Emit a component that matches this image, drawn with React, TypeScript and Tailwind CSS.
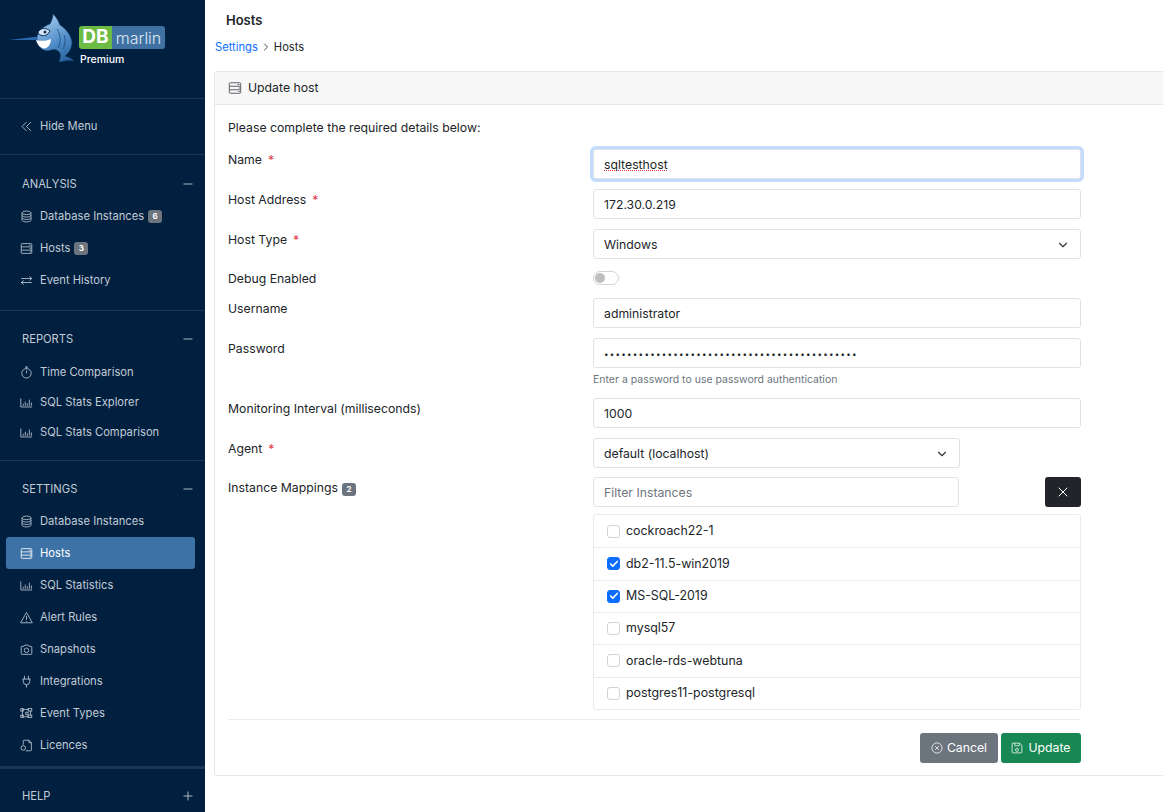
import { ChevronDown, Minus, Plus, X, Check, ChevronRight } from "lucide-react";

type IconProps = { className?: string };

function Svg({ className, children }: IconProps & { children: React.ReactNode }) {
  return (
    <svg viewBox="0 0 16 16" fill="none" stroke="currentColor" strokeWidth="1" className={className}>
      {children}
    </svg>
  );
}

const HideIcon = ({ className }: IconProps) => (
  <Svg className={className}>
    <path d="M8 2.5 2.5 8 8 13.5M13.5 2.5 8 8l5.5 5.5" />
  </Svg>
);
const DatabaseIcon = ({ className }: IconProps) => (
  <Svg className={className}>
    <ellipse cx="8" cy="3.5" rx="5.5" ry="2.2" />
    <path d="M2.5 3.5v9c0 1.2 2.5 2.2 5.5 2.2s5.5-1 5.5-2.2v-9M2.5 6.5c0 1.2 2.5 2.2 5.5 2.2s5.5-1 5.5-2.2M2.5 9.5c0 1.2 2.5 2.2 5.5 2.2s5.5-1 5.5-2.2" />
  </Svg>
);
const HostIcon = ({ className }: IconProps) => (
  <Svg className={className}>
    <rect x="1.5" y="2" width="13" height="12" rx="1" />
    <path d="M1.5 6h13M1.5 10h13M11 4h2M12 8h1.5M12 12h1.5" />
  </Svg>
);
const ExchangeIcon = ({ className }: IconProps) => (
  <Svg className={className}>
    <path d="M1.5 5.5h13M11.5 3l3 2.5-3 2.5M14.5 10.5h-13M4.5 8l-3 2.5 3 2.5" />
  </Svg>
);
const StopwatchIcon = ({ className }: IconProps) => (
  <Svg className={className}>
    <circle cx="8" cy="9" r="5.8" />
    <path d="M6.2 1.2h3.6M8 1.2v2M8 5.5V9" />
  </Svg>
);
const ChartIcon = ({ className }: IconProps) => (
  <Svg className={className}>
    <path d="M1 3v10.5h14M4 12V9.5M6.5 12V7M9 12V9M11.5 12V4.5M14 12V8" />
  </Svg>
);
const AlertIcon = ({ className }: IconProps) => (
  <Svg className={className}>
    <path d="M8 1.8 15.2 14.5H.8L8 1.8ZM8 6v5M8 12.2v1" />
  </Svg>
);
const CameraIcon = ({ className }: IconProps) => (
  <Svg className={className}>
    <path d="M2.5 4H5l1-1.5h4L11 4h2.5a1 1 0 0 1 1 1v8a1 1 0 0 1-1 1h-11a1 1 0 0 1-1-1V5a1 1 0 0 1 1-1Z" />
    <circle cx="8" cy="9" r="2.8" />
  </Svg>
);
const PlugIcon = ({ className }: IconProps) => (
  <Svg className={className}>
    <path d="M5.5 1v4M10.5 1v4M3 5h10M4 5v3a4 4 0 0 0 8 0V5M8 12v3.5" />
  </Svg>
);
const EventTypeIcon = ({ className }: IconProps) => (
  <Svg className={className}>
    <path d="M3 3h8M3 3v9M3 12h8M13 5v5" />
    <rect x="1" y="2" width="3" height="3" />
    <rect x="1" y="10" width="3" height="3" />
    <rect x="10" y="2" width="4.5" height="3" />
    <rect x="10" y="10" width="4.5" height="3" />
    <path d="M7 6.5h3v3H7z" />
  </Svg>
);
const LicenceIcon = ({ className }: IconProps) => (
  <Svg className={className}>
    <path d="M4 7V2.5a1 1 0 0 1 1-1h6l3 3v9a1 1 0 0 1-1 1H7" />
    <path d="M11 1.5v3h3" />
    <circle cx="4" cy="11" r="2.8" />
  </Svg>
);
const CancelIcon = ({ className }: IconProps) => (
  <Svg className={className}>
    <circle cx="8" cy="8" r="6.8" />
    <path d="M5.5 5.5l5 5M10.5 5.5l-5 5" />
  </Svg>
);
const SaveIcon = ({ className }: IconProps) => (
  <Svg className={className}>
    <path d="M2.5 1.5h9l3 3v9a1 1 0 0 1-1 1h-11a1 1 0 0 1-1-1v-11a1 1 0 0 1 1-1Z" />
    <path d="M5 1.5v3.5h6V1.5" />
    <circle cx="8" cy="10.5" r="2" />
  </Svg>
);

function Marlin() {
  return (
    <svg viewBox="0 0 71 52" className="h-[52px] w-[71px] shrink-0">
      <defs>
        <linearGradient id="fish" x1="0.3" y1="0" x2="0.7" y2="1">
          <stop offset="0" stopColor="#a4cbec" />
          <stop offset="0.6" stopColor="#4f8cc8" />
          <stop offset="1" stopColor="#2c659f" />
        </linearGradient>
      </defs>
      <path d="M1 28 L30 24.5 L30 28 Z" fill="#2a69ad" />
      <path
        d="M29 25 C31 18 36 14 42 12 C44 8 45 5 45 2 C48 5 50 8 52 13 C58 17 63 23 64 30 C64 36 61 41 57 44 C60 45 63 46 66 49 C61 48 56 49 51 50 C52 47 53 44 52 41 C49 37 46 37 43 38 C38 40 32 38 29 30 Z"
        fill="url(#fish)"
        stroke="#123f70"
        strokeWidth="0.6"
      />
      <path d="M28 28 C33 29.5 38 29 43 27 C43 32 40 36.5 36 36.5 C32 36 29.5 32.5 28 28 Z" fill="#ffffff" />
      <path d="M30 21 C31 16 38 15 42 19 L39 23 C36 24 32 24 30 21 Z" fill="#d5e6f5" stroke="#0f3156" strokeWidth="1" />
      <circle cx="37" cy="20" r="1.5" fill="#0f3156" />
      <path d="M49 17 C53 23 53 31 50 36M56 23 C58 28 57 33 55 37" stroke="#174a7f" strokeWidth="0.8" fill="none" />
    </svg>
  );
}

function Badge({ n }: { n: number }) {
  return (
    <span className="ml-1 inline-flex h-[13px] w-[14px] items-center justify-center rounded-[3px] bg-[#6c757d] text-[8px] font-bold text-white">
      {n}
    </span>
  );
}

function NavItem({
  icon: Icon,
  label,
  badge,
  active,
  h = "h-8",
}: {
  icon: React.ComponentType<IconProps>;
  label: string;
  badge?: number;
  active?: boolean;
  h?: string;
}) {
  return (
    <div
      className={`ml-[6px] mr-[10px] flex items-center pl-[14px] ${h} ${
        active ? "rounded-[3px] bg-[#3d72a6] text-white" : "text-[#c2cbd5]"
      }`}
    >
      <Icon className="mr-[7px] h-[13px] w-[13px] shrink-0" />
      <span>{label}</span>
      {badge !== undefined && <Badge n={badge} />}
    </div>
  );
}

function SectionTitle({ title, open = true }: { title: string; open?: boolean }) {
  return (
    <div className="flex h-[16px] items-center justify-between pl-[22px] pr-[10px] text-[#c2cbd5]">
      <span>{title}</span>
      {open ? <Minus className="h-[14px] w-[14px]" strokeWidth={1.5} /> : <Plus className="h-[14px] w-[14px]" strokeWidth={1.5} />}
    </div>
  );
}

function Sidebar() {
  return (
    <aside className="flex w-[205px] shrink-0 flex-col bg-[#012040] text-[11.2px]">
      <div className="flex h-[99px] shrink-0 items-start border-b border-[#17365a] pl-[8px] pt-[12px]">
        <Marlin />
        <div className="mt-[14px]">
          <div className="flex h-[23px] w-[86px] overflow-hidden rounded-[3px] text-white">
            <span className="flex w-[33px] items-center justify-center bg-[#6cbb45] text-[19px] font-bold">DB</span>
            <span className="flex flex-1 items-center justify-center bg-[#3f72a3] text-[16px] font-light text-[#dfe9f3]">marlin</span>
          </div>
          <div className="mt-[3px] pl-[1px] text-[10.5px] font-medium text-white">Premium</div>
        </div>
      </div>
      <div className="flex h-[56px] shrink-0 items-center border-b border-[#17365a] pl-[20px] text-[#c2cbd5]">
        <HideIcon className="mr-[7px] h-[13px] w-[13px]" />
        Hide Menu
      </div>
      <div className="h-[156px] border-b border-[#17365a] pt-[21px]">
        <SectionTitle title="ANALYSIS" />
        <div className="mt-[8px]">
          <NavItem icon={DatabaseIcon} label="Database Instances" badge={6} />
          <NavItem icon={HostIcon} label="Hosts" badge={3} />
          <NavItem icon={ExchangeIcon} label="Event History" />
        </div>
      </div>
      <div className="h-[150px] border-b border-[#17365a] pt-[20px]">
        <SectionTitle title="REPORTS" />
        <div className="mt-[10px]">
          <NavItem icon={StopwatchIcon} label="Time Comparison" h="h-[30px]" />
          <NavItem icon={ChartIcon} label="SQL Stats Explorer" h="h-[30px]" />
          <NavItem icon={ChartIcon} label="SQL Stats Comparison" h="h-[30px]" />
        </div>
      </div>
      <div className="h-[308px] border-b-[3px] border-[#17365a] pt-[20px]">
        <SectionTitle title="SETTINGS" />
        <div className="mt-[8px]">
          <NavItem icon={DatabaseIcon} label="Database Instances" />
          <NavItem icon={HostIcon} label="Hosts" active />
          <NavItem icon={ChartIcon} label="SQL Statistics" />
          <NavItem icon={AlertIcon} label="Alert Rules" />
          <NavItem icon={CameraIcon} label="Snapshots" />
          <NavItem icon={PlugIcon} label="Integrations" />
          <NavItem icon={EventTypeIcon} label="Event Types" />
          <NavItem icon={LicenceIcon} label="Licences" />
        </div>
      </div>
      <div className="pt-[19px]">
        <SectionTitle title="HELP" open={false} />
      </div>
    </aside>
  );
}

function Row({
  label,
  required,
  badge,
  className,
  children,
}: {
  label: string;
  required?: boolean;
  badge?: number;
  className?: string;
  children: React.ReactNode;
}) {
  return (
    <div className={`flex ${className}`}>
      <div className="w-[365px] shrink-0 pt-[2px] leading-[17px]">
        {label}
        {required && <span className="ml-[6px] text-[#dc3545]">*</span>}
        {badge !== undefined && <Badge n={badge} />}
      </div>
      <div className="w-[488px]">{children}</div>
    </div>
  );
}

const inputCls = "flex h-[30px] items-center rounded-[3px] border border-[#dee2e6] bg-white px-[10px] pt-[2px]";

const instances = [
  { name: "cockroach22-1", checked: false },
  { name: "db2-11.5-win2019", checked: true },
  { name: "MS-SQL-2019", checked: true },
  { name: "mysql57", checked: false },
  { name: "oracle-rds-webtuna", checked: false },
  { name: "postgres11-postgresql", checked: false },
];

export default function App() {
  return (
    <div className="flex h-[812px] w-[1163px] overflow-hidden bg-white font-['Inter',sans-serif] text-[12.25px] text-[#212529]">
      <Sidebar />
      <main className="min-w-0 flex-1 pl-[9px]">
        <h1 className="pl-[12px] pt-[12px] text-[13px] font-semibold leading-[17px]">Hosts</h1>
        <div className="mt-[10px] flex h-[16px] items-center pl-[1px] text-[11.2px]">
          <span className="text-[#0d6efd]">Settings</span>
          <ChevronRight className="mx-[2px] h-3 w-3 text-[#495057]" />
          <span>Hosts</span>
        </div>
        <div className="mt-[16px] h-[705px] w-[1000px] rounded-[3px] border border-[#e5e7ea]">
          <div className="flex h-[33px] items-center border-b border-[#e5e7ea] bg-[#f7f7f7] pl-[13px]">
            <HostIcon className="mr-[6px] h-[14px] w-[14px] text-[#495057]" />
            Update host
          </div>
          <div className="pl-[13px] pt-[14px]">
            <div className="h-[17px] leading-[17px]">Please complete the required details below:</div>
            <Row label="Name" required className="mt-[13px] h-[40px]">
              <div className={`${inputCls} border-[#86b7fe] shadow-[0_0_0_3px_rgba(13,110,253,0.25)]`}>
                <span className="underline decoration-dotted decoration-[#dc3545] decoration-1">sqltesthost</span>
              </div>
            </Row>
            <Row label="Host Address" required className="h-[40px]">
              <div className={inputCls}>172.30.0.219</div>
            </Row>
            <Row label="Host Type" required className="h-[40px]">
              <div className={`${inputCls} justify-between`}>
                Windows
                <ChevronDown className="h-[14px] w-[14px] text-[#343a40]" />
              </div>
            </Row>
            <Row label="Debug Enabled" className="mt-[-1px] h-[30px]">
              <div className="mt-[3px] h-[14px] w-[26px] rounded-full border border-[#ced4da] bg-white p-[1px]">
                <div className="h-[10px] w-[10px] rounded-full bg-[#bfbfbf]" />
              </div>
            </Row>
            <Row label="Username" className="h-[40px]">
              <div className={inputCls}>administrator</div>
            </Row>
            <Row label="Password" className="h-[60px]">
              <div className={`${inputCls} overflow-hidden text-[8px] tracking-[1.27px]`}>
                {"•".repeat(44)}
              </div>
              <div className="mt-[4px] text-[10.5px] text-[#6c757d]">Enter a password to use password authentication</div>
            </Row>
            <Row label="Monitoring Interval (milliseconds)" className="h-[40px]">
              <div className={inputCls}>1000</div>
            </Row>
            <Row label="Agent" required className="h-[39px]">
              <div className={`${inputCls} w-[367px] justify-between`}>
                default (localhost)
                <ChevronDown className="h-[14px] w-[14px] text-[#343a40]" />
              </div>
            </Row>
            <Row label="Instance Mappings" badge={2}>
              <div className="flex items-center justify-between">
                <div className={`${inputCls} w-[366px] text-[#6c757d]`}>Filter Instances</div>
                <button className="flex h-[30px] w-[36px] items-center justify-center rounded-[3px] bg-[#212529] text-white">
                  <X className="h-4 w-4" strokeWidth={1.5} />
                </button>
              </div>
              <ul className="mt-[7px] rounded-[3px] border border-[#e9ecef] text-[12.4px]">
                {instances.map((item, i) => (
                  <li
                    key={item.name}
                    className={`flex h-[32.33px] items-center pl-[13px] ${i > 0 ? "border-t border-[#e9ecef]" : ""}`}
                  >
                    <span
                      className={`mr-[6px] flex h-[13px] w-[13px] items-center justify-center rounded-[3px] border ${
                        item.checked ? "border-[#0d6efd] bg-[#0d6efd]" : "border-[#ced4da] bg-white"
                      }`}
                    >
                      {item.checked && <Check className="h-[10px] w-[10px] text-white" strokeWidth={4} />}
                    </span>
                    {item.name}
                  </li>
                ))}
              </ul>
            </Row>
            <div className="mt-[9px] w-[853px] border-t border-[#e9ecef] pt-[13px]">
              <div className="flex justify-end gap-[3px]">
                <button className="flex h-[30px] w-[78px] items-center justify-center rounded-[3px] bg-[#6c757d] text-white">
                  <CancelIcon className="mr-[4px] h-[12px] w-[12px]" />
                  Cancel
                </button>
                <button className="flex h-[30px] w-[80px] items-center justify-center rounded-[3px] bg-[#198754] text-white">
                  <SaveIcon className="mr-[5px] h-[12px] w-[12px]" />
                  Update
                </button>
              </div>
            </div>
          </div>
        </div>
      </main>
    </div>
  );
}
